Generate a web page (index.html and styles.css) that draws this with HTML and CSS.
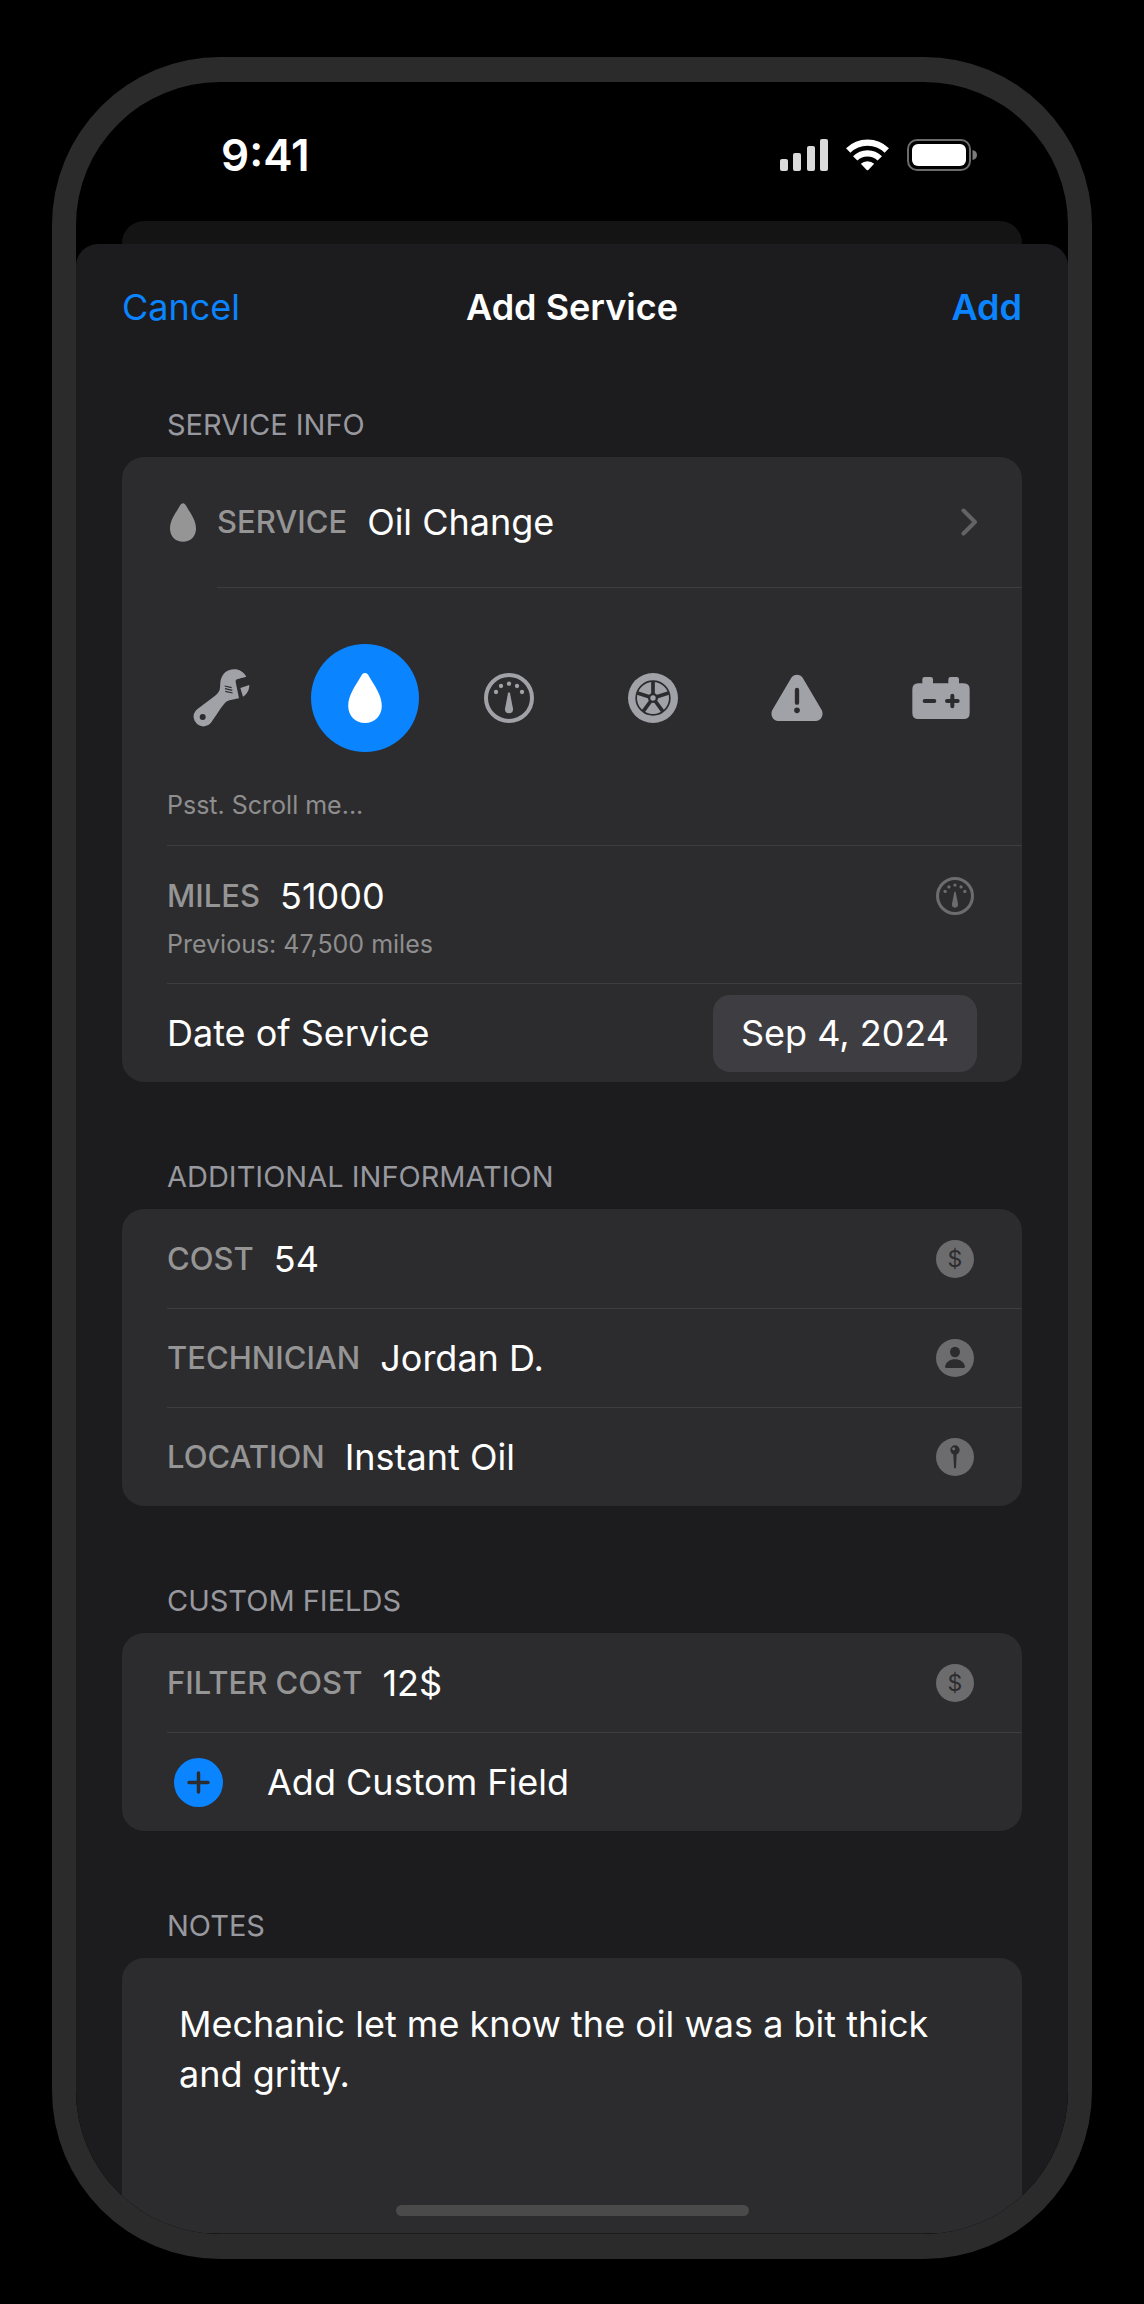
FILE: index.html
```html
<!DOCTYPE html>
<html lang="en">
<head>
<meta charset="utf-8">
<meta name="viewport" content="width=device-width, initial-scale=1">
<title>Add Service</title>
<link rel="stylesheet" href="styles.css">
</head>
<body>
<svg class="sprite" aria-hidden="true">
  <symbol id="drop" viewBox="0 0 78 116">
    <path d="M39 0C43 0 46 3 48 7C60 29 78 50 78 76C78 100 61 116 39 116C17 116 0 100 0 76C0 50 18 29 30 7C32 3 35 0 39 0Z" fill="currentColor"/>
  </symbol>
  <symbol id="gauge" viewBox="-75 -75 150 150">
    <circle r="69" fill="none" stroke="currentColor" stroke-width="12"/>
    <g fill="currentColor">
      <circle cy="-43" r="6.5"/><circle cx="-24" cy="-36" r="6.5"/><circle cx="24" cy="-36" r="6.5"/>
      <circle cx="-39" cy="-18" r="6.5"/><circle cx="39" cy="-18" r="6.5"/>
      <path d="M-3-14Q0-21 3-14L12 32Q13 46 0 46Q-13 46-12 32Z"/>
    </g>
  </symbol>
</svg>

<main class="phone">
  <div class="status">
    <span class="time">9:41</span>
    <div class="status-icons">
      <svg width="48" height="32" viewBox="0 0 48 32" fill="#dadada" aria-label="Signal">
        <rect y="20" width="8" height="12" rx="2"/><rect x="13" y="14" width="8" height="18" rx="2"/>
        <rect x="27" y="7" width="8" height="25" rx="2"/><rect x="40" width="8" height="32" rx="2"/>
      </svg>
      <svg width="43" height="32" viewBox="0 0 43 32" fill="none" stroke="#fff" stroke-width="6.2" aria-label="Wi-Fi">
        <path d="M2.2 11.5A27.6 27.6 0 0 1 40.800 11.5"/>
        <path d="M9.200 19.400A17.400 17.400 0 0 1 33.800 19.400"/>
        <path d="M14.800 24.800A10 10 0 0 1 28.200 24.800L22.300 30.900Q21.500 31.700 20.700 30.900Z" fill="#fff" stroke="none"/>
      </svg>
      <svg width="70" height="32" viewBox="0 0 70 32" aria-label="Battery">
        <rect x="1" y="1" width="62" height="30" rx="9" fill="none" stroke="#6b6b6b" stroke-width="2"/>
        <rect x="5" y="5" width="54" height="22" rx="6" fill="#fff"/>
        <path d="M65.500 11Q70 12 70 16T65.500 21Z" fill="#7b7b7b"/>
      </svg>
    </div>
  </div>
  <div class="back-sheet"></div>

  <form class="sheet">
    <header class="nav">
      <button type="button" class="link">Cancel</button>
      <h1>Add Service</h1>
      <button type="button" class="link strong">Add</button>
    </header>

    <section>
      <h2>SERVICE INFO</h2>
      <div class="card">
        <button type="button" class="service">
          <svg class="service-drop"><use href="#drop"/></svg>
          <span class="service-body">
            <span class="label">SERVICE</span>
            <span class="value">Oil Change</span>
            <svg class="chevron" viewBox="0 0 16 28" fill="none" stroke="#636364" stroke-width="4" stroke-linecap="round" stroke-linejoin="round"><path d="M2.500 2.500L14 14L2.500 25.500"/></svg>
          </span>
        </button>

        <div class="picker">
          <div class="choices">
            <button type="button" class="choice" aria-label="Repair">
              <svg width="60" height="60" viewBox="0 0 180 180">
                <path fill="currentColor" d="M166 26C158 12 145 4 130 4C106 4 91 20 88 43C87 56 89 66 80 76C70 87 28 116 14 128A29 29 0 1 0 60 164C73 147 92 114 104 103C111 96 121 96 144 91L134 42Q133 36 138 34C146 31 156 29 166 26ZM148 60L175 51C175 65 168 79 156 86Z"/>
                <circle cx="35" cy="147" r="9" class="cut"/>
                <path class="cut-line" stroke-width="3.500" d="M101 54L122 59M102 62L124 67M103 70L125 75"/>
              </svg>
            </button>
            <button type="button" class="choice selected" aria-label="Oil change" aria-pressed="true">
              <svg width="34" height="50"><use href="#drop"/></svg>
            </button>
            <button type="button" class="choice" aria-label="Inspection">
              <svg width="50" height="50"><use href="#gauge"/></svg>
            </button>
            <button type="button" class="choice" aria-label="Tires">
              <svg width="50" height="50" viewBox="-75 -75 150 150">
                <circle r="75" fill="currentColor"/>
                <circle r="50.500" class="cut-line" stroke-width="5"/>
                <g class="cut-line" stroke-width="11">
                  <path d="M0 0V-49M0 0L46.600-15.100M0 0L28.800 39.600M0 0L-28.800 39.600M0 0L-46.600-15.100"/>
                </g>
                <circle r="15" class="cut"/><circle r="8" fill="currentColor"/>
              </svg>
            </button>
            <button type="button" class="choice" aria-label="Warning">
              <svg width="52" height="50" viewBox="0 0 154 150">
                <path fill="currentColor" d="M60 14C67 2 87 2 94 14L151 111C158 124 150 144 134 144H20C4 144-4 124 3 111Z"/>
                <path class="cut-line" stroke-width="13" stroke-linecap="round" d="M77 51L77 89"/><circle cx="77" cy="112" r="8.500" class="cut"/>
              </svg>
            </button>
            <button type="button" class="choice" aria-label="Battery">
              <svg width="58" height="42" viewBox="0 0 172 126">
                <path fill="currentColor" d="M18 19H30V7Q30 0 37 0H55Q62 0 62 7V19H108V7Q108 0 115 0H133Q140 0 140 7V19H154Q172 19 172 37V108Q172 126 154 126H18Q0 126 0 108V37Q0 19 18 19Z"/>
                <path class="cut-line" stroke-width="12" stroke-linecap="round" d="M37 72H66M104 72H136M120 56V88"/>
              </svg>
            </button>
          </div>
          <p class="hint">Psst. Scroll me...</p>
        </div>

        <div class="row miles">
          <div class="field">
            <label class="label" for="miles">MILES</label>
            <input class="value" id="miles" value="51000" inputmode="numeric">
            <svg class="badge"><use href="#gauge"/></svg>
          </div>
          <p class="hint">Previous: 47,500 miles</p>
        </div>
        <div class="row date">
          <span class="value" id="date-label">Date of Service</span>
          <button type="button" class="pill" aria-describedby="date-label">Sep 4, 2024</button>
        </div>
      </div>
    </section>

    <section>
      <h2>ADDITIONAL INFORMATION</h2>
      <div class="card">
        <div class="row field">
          <label class="label" for="cost">COST</label>
          <input class="value" id="cost" value="54">
          <span class="badge coin">$</span>
        </div>
        <div class="row field">
          <label class="label" for="technician">TECHNICIAN</label>
          <input class="value" id="technician" value="Jordan D.">
          <svg class="badge" viewBox="-57 -57 114 114">
            <circle r="57" fill="currentColor"/>
            <ellipse class="cut" cy="-18" rx="15" ry="16"/>
            <path class="cut" d="M-30 26C-27 12-15 4 0 4S27 12 30 26Q30 30 25 30H-25Q-30 30-30 26Z"/>
          </svg>
        </div>
        <div class="row field">
          <label class="label" for="location">LOCATION</label>
          <input class="value" id="location" value="Instant Oil">
          <svg class="badge" viewBox="-57 -57 114 114">
            <circle r="57" fill="currentColor"/>
            <circle class="cut" cy="-21" r="14"/>
            <circle cx="-4" cy="-25" r="4.500" fill="currentColor"/>
            <path class="cut" d="M-5-9H5L3 31Q0 38-3 31Z"/>
          </svg>
        </div>
      </div>
    </section>

    <section>
      <h2>CUSTOM FIELDS</h2>
      <div class="card">
        <div class="row field">
          <label class="label" for="filter-cost">FILTER COST</label>
          <input class="value" id="filter-cost" value="12$">
          <span class="badge coin">$</span>
        </div>
        <button type="button" class="row add-field">
          <svg class="plus" viewBox="0 0 49 49">
            <circle cx="24.500" cy="24.500" r="24.500" fill="#0a84ff"/>
            <path class="cut-line" stroke-width="3.500" stroke-linecap="round" d="M24.500 15V34M15 24.500H34"/>
          </svg>
          <span class="value">Add Custom Field</span>
        </button>
      </div>
    </section>

    <section>
      <h2><label for="notes">NOTES</label></h2>
      <textarea class="notes" id="notes">Mechanic let me know the oil was a bit thick and gritty.</textarea>
    </section>
  </form>
  <div class="home-indicator"></div>
</main>
</body>
</html>
```

FILE: styles.css
```css
:root {
  --sheet: #1c1c1e;
  --card: #2c2c2e;
  --line: #3d3d40;
  --blue: #0a84ff;
  --inset: 45px;
}

* { box-sizing: border-box; }

body {
  margin: 0;
  padding: 57px 52px 45px;
  background: #000;
  color: #fff;
  font-family: Inter, "Liberation Sans", sans-serif;
  font-size: 36px;
  line-height: 46px;
}

button, input, textarea {
  margin: 0;
  padding: 0;
  border: 0;
  background: none;
  color: inherit;
  font: inherit;
}

button { cursor: pointer; }
h1, h2, p { margin: 0; }
svg { display: block; flex: none; }
.sprite { position: absolute; width: 0; height: 0; }
.cut { fill: var(--card); }
.cut-line { fill: none; stroke: var(--card); }

.phone {
  position: relative;
  overflow: hidden;
  border: solid #2b2b2b;
  border-width: 25px 24px;
  border-radius: 168px;
}

.status {
  display: flex;
  justify-content: space-between;
  align-items: center;
  height: 139px;
  padding: 6px 91px 0 145px;
}

.time { font-size: 44px; font-weight: 600; }
.status-icons { display: flex; gap: 18px; }

.back-sheet {
  height: 23px;
  margin: 0 46px;
  border-radius: 22px 22px 0 0;
  background: #141414;
}

.sheet {
  padding: 40px 46px 1px;
  border-radius: 22px 22px 0 0;
  background: var(--sheet);
}

.nav {
  display: grid;
  grid-template-columns: 1fr auto 1fr;
  align-items: center;
}

h1 { font-size: 36px; font-weight: 600; line-height: 46px; }
.link { justify-self: start; color: var(--blue); }
.strong { justify-self: end; font-weight: 600; }

section { margin-top: 75px; }

h2 {
  margin: 0 var(--inset) 12px;
  color: #98989f;
  font-size: 29px;
  font-weight: 400;
  line-height: 40px;
}

.card {
  overflow: hidden;
  border-radius: 22px;
  background: var(--card);
}

.label {
  flex: none;
  color: #959595;
  font-size: 31px;
  font-weight: 500;
}

.value { min-width: 0; }
input.value { flex: 1; height: 46px; }

.service {
  display: flex;
  align-items: center;
  width: 100%;
  padding-left: 48px;
  text-align: left;
}

.service-drop { width: 26px; height: 39px; color: #959595; }

.service-body {
  display: flex;
  flex: 1;
  align-items: center;
  gap: 20px;
  height: 131px;
  margin-left: 21px;
  padding-right: var(--inset);
  border-bottom: 1px solid var(--line);
}

.chevron { width: 16px; height: 28px; margin-left: auto; }

.picker { padding: 56px 0 24px var(--inset); }

.choices {
  display: flex;
  gap: 36px;
  overflow-x: auto;
  scrollbar-width: none;
}

.choice {
  display: grid;
  flex: none;
  place-items: center;
  width: 108px;
  height: 108px;
  border-radius: 50%;
  color: #a1a1a8;
}

.selected { background: var(--blue); color: #fff; }

.hint { color: #8e8e8e; font-size: 25px; line-height: 32px; }
.picker .hint { margin-top: 37px; }

.row {
  min-height: 99px;
  margin-left: var(--inset);
  padding-right: var(--inset);
  border-top: 1px solid var(--line);
}

.row:first-child { border-top-color: transparent; }
.field { display: flex; align-items: center; gap: 20px; }
.miles { padding-top: 27px; padding-bottom: 23px; }
.miles .hint { margin-top: 9px; }

.badge {
  flex: none;
  width: 38px;
  height: 38px;
  margin-right: 3px;
  color: #6c6c6e;
}

.coin {
  border-radius: 50%;
  background: #6c6c6e;
  color: var(--card);
  font-size: 23px;
  line-height: 38px;
  text-align: center;
}

.date { display: flex; align-items: center; justify-content: space-between; }

.pill {
  height: 77px;
  padding: 0 28px;
  border-radius: 17px;
  background: #3e3d42;
}

.add-field {
  display: flex;
  align-items: center;
  gap: 44px;
  width: calc(100% - var(--inset));
  border-width: 1px 0 0;
  padding-left: 7px;
  text-align: left;
}

.plus { width: 49px; height: 49px; }

.notes {
  display: block;
  width: 100%;
  height: 275px;
  padding: 41px 57px;
  border-radius: 22px 22px 0 0;
  background: var(--card);
  line-height: 50px;
  resize: none;
}

.home-indicator {
  position: absolute;
  right: 0;
  bottom: 18px;
  left: 0;
  max-width: 353px;
  height: 11px;
  margin: 0 auto;
  border-radius: 6px;
  background: #4a4a4a;
}
```
